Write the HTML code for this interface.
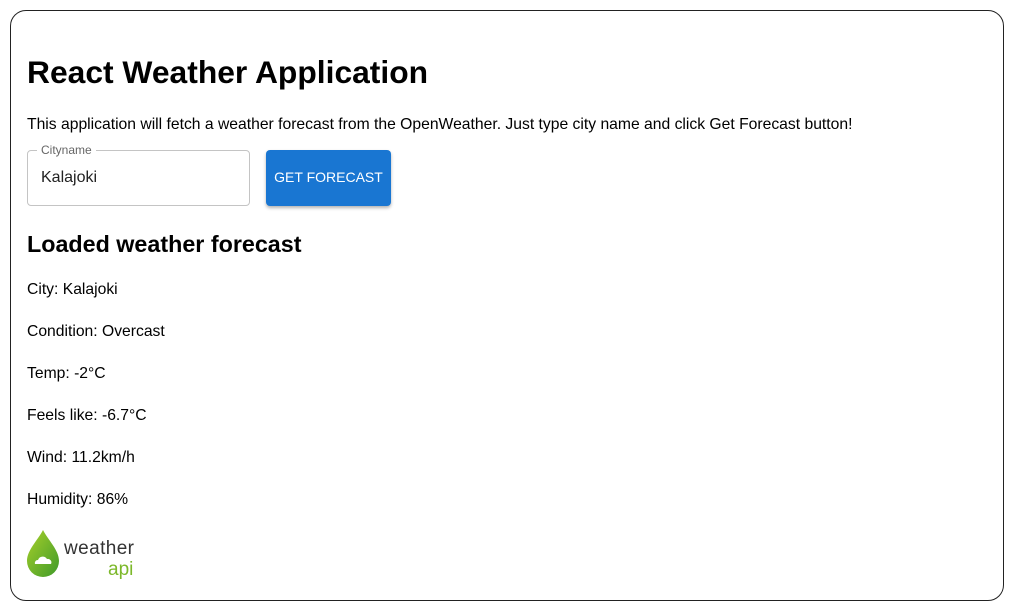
<!DOCTYPE html>
<html><head><style>
body{margin:0;background:#fff;font-family:"Liberation Sans",sans-serif;color:#000;}
.card{position:absolute;left:10px;top:10px;width:992px;height:589px;border:1px solid #222;border-radius:16px;}
.abs{position:absolute;white-space:nowrap;}
h1{position:absolute;left:27px;top:52px;margin:0;font-size:31.8px;font-weight:bold;line-height:40px;}
h2{position:absolute;left:27px;top:230px;margin:0;font-size:23.3px;font-weight:bold;line-height:28px;}
.p{font-size:15.7px;line-height:18px;left:27px;}
.input{position:absolute;left:27px;top:150px;width:221px;height:54px;border:1px solid #c4c4c4;border-radius:4px;}
.lbl{position:absolute;left:37px;top:143px;background:#fff;padding:0 4px;font-size:12px;color:#666;line-height:14px;}
.val{position:absolute;left:41px;top:169px;font-size:16px;color:#222;}
.btn{position:absolute;left:266px;top:150px;width:125px;height:56px;background:#1976d2;border-radius:4px;color:#fff;font-size:14px;line-height:54px;text-align:center;box-shadow:0 2px 3px rgba(0,0,0,.3);}
</style></head><body>
<div class="card"></div>
<h1>React Weather Application</h1>
<div class="abs p" style="top:116px;">This application will fetch a weather forecast from the OpenWeather. Just type city name and click Get Forecast button!</div>
<div class="input"></div>
<div class="lbl">Cityname</div>
<div class="val">Kalajoki</div>
<div class="btn">GET FORECAST</div>
<h2>Loaded weather forecast</h2>
<div class="abs p" style="top:281px;">City: Kalajoki</div>
<div class="abs p" style="top:323px;">Condition: Overcast</div>
<div class="abs p" style="top:365px;">Temp: -2°C</div>
<div class="abs p" style="top:407px;">Feels like: -6.7°C</div>
<div class="abs p" style="top:449px;">Wind: 11.2km/h</div>
<div class="abs p" style="top:491px;">Humidity: 86%</div>
<svg class="abs" style="left:26px;top:528px" width="112" height="52" viewBox="0 0 112 52">
<defs><linearGradient id="g" x1="0" y1="0" x2="1" y2="1"><stop offset="0" stop-color="#a8d02a"/><stop offset="1" stop-color="#3f9a2a"/></linearGradient></defs>
<path d="M17 2 C12 12 1 22 1 33 A16 16 0 0 0 33 33 C33 22 22 12 17 2 Z" fill="url(#g)"/>
<path d="M9 36 a3 3 0 0 1 3-4 a5 5 0 0 1 9-1 a3.5 3.5 0 0 1 4 5 Z" fill="#fff"/>
<text x="38" y="26" font-family="Liberation Sans,sans-serif" font-size="19" fill="#333" textLength="70">weather</text>
<text x="82" y="47" font-family="Liberation Sans,sans-serif" font-size="19" fill="#7cb82a">api</text>
</svg>
</body></html>
